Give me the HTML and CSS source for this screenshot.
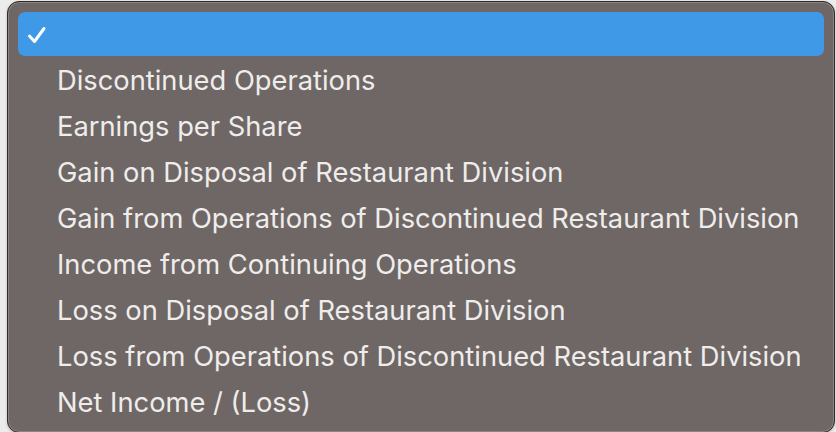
FILE: index.html
```html
<!DOCTYPE html>
<html lang="en">
<head>
  <meta charset="UTF-8" />
  <title>Select menu</title>
  <link rel="stylesheet" href="styles.css">
</head>
<body>
  <ul class="menu">
    <li class="item selected">
      <svg class="check" width="20" height="18" viewBox="0 0 20 18">
        <path d="M2.5 10 L7.5 15.5 L17 2.5" fill="none" stroke="#fff" stroke-width="3" stroke-linecap="round" stroke-linejoin="round"/>
      </svg>
    </li>
    <li class="item">Discontinued Operations</li>
    <li class="item">Earnings per Share</li>
    <li class="item">Gain on Disposal of Restaurant Division</li>
    <li class="item">Gain from Operations of Discontinued Restaurant Division</li>
    <li class="item">Income from Continuing Operations</li>
    <li class="item">Loss on Disposal of Restaurant Division</li>
    <li class="item">Loss from Operations of Discontinued Restaurant Division</li>
    <li class="item">Net Income / (Loss)</li>
  </ul>
</body>
</html>
```

FILE: styles.css
```css
:root {
  --menu-bg: #6e6765;
  --highlight: #3f99e6;
  --text: #efedec;
}

body {
  margin: 0;
  background: #ececec;
  font-family: 'Inter', 'Roboto', sans-serif;
  overflow: hidden;
}

.menu {
  list-style: none;
  margin: 1px 1px 0 7px;
  padding: 10px 10px 6px;
  height: 414px;
  background: var(--menu-bg);
  border: 1px solid #2e2b2a;
  border-radius: 12px;
  box-shadow: inset 0 0 0 1px #8a8482, 0 1px 3px rgba(0,0,0,0.2);
  display: flex;
  flex-direction: column;
  gap: 2px;
}

.item {
  position: relative;
  height: 44px;
  display: flex;
  align-items: center;
  padding-left: 39px;
  border-radius: 7px;
  color: var(--text);
  font-size: 27.3px;
  white-space: nowrap;
}

.item.selected {
  background: var(--highlight);
}

.check {
  position: absolute;
  left: 9px;
  top: 14px;
}
```
